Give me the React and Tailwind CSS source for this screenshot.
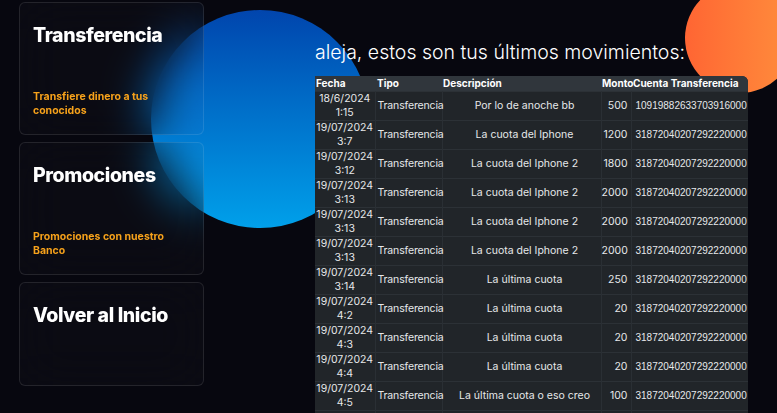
import React from 'react';

const movimientos = [
  ['18/6/2024 1:15', 'Transferencia', 'Por lo de anoche bb', '500', '10919882633703916000'],
  ['19/07/2024 3:7', 'Transferencia', 'La cuota del Iphone', '1200', '31872040207292220000'],
  ['19/07/2024 3:12', 'Transferencia', 'La cuota del Iphone 2', '1800', '31872040207292220000'],
  ['19/07/2024 3:13', 'Transferencia', 'La cuota del Iphone 2', '2000', '31872040207292220000'],
  ['19/07/2024 3:13', 'Transferencia', 'La cuota del Iphone 2', '2000', '31872040207292220000'],
  ['19/07/2024 3:13', 'Transferencia', 'La cuota del Iphone 2', '2000', '31872040207292220000'],
  ['19/07/2024 3:14', 'Transferencia', 'La última cuota', '250', '31872040207292220000'],
  ['19/07/2024 4:2', 'Transferencia', 'La última cuota', '20', '31872040207292220000'],
  ['19/07/2024 4:3', 'Transferencia', 'La última cuota', '20', '31872040207292220000'],
  ['19/07/2024 4:4', 'Transferencia', 'La última cuota', '20', '31872040207292220000'],
  ['19/07/2024 4:5', 'Transferencia', 'La última cuota o eso creo', '100', '31872040207292220000'],
  ['19/07/2024 4:6', 'Transferencia', 'La última cuota', '20', '31872040207292220000'],
];

function Card({ title, text, tall }) {
  return (
    <div
      className={`w-[185px] rounded-md border border-white/10 bg-white/[0.02] backdrop-blur-xl px-[13px] ${
        tall ? 'h-[133px]' : 'h-[104px]'
      }`}
    >
      <h2 className="mt-[17px] text-[19.5px] leading-[30px] font-extrabold text-white tracking-[-0.4px]">{title}</h2>
      {text && (
        <p className="mt-[40px] pr-[20px] text-[10.5px] leading-[14px] font-bold text-[#f7a21b]">{text}</p>
      )}
    </div>
  );
}

export default function App() {
  return (
    <div className="relative w-[777px] h-[413px] overflow-hidden bg-[#07070f] font-['Inter',sans-serif]">
      {/* fondo */}
      <div className="absolute left-[151px] top-[10px] w-[218px] h-[218px] rounded-full bg-gradient-to-b from-[#0245ad] to-[#02a0ea]" />
      <div className="absolute left-[685px] top-[-17px] w-[110px] h-[110px] rounded-full bg-gradient-to-r from-[#ff6533] to-[#ff8d3c]" />
      <div className="absolute left-[303px] top-[392px] w-[120px] h-[120px] rounded-full bg-[#ff5f2e]" />

      <div className="relative flex">
        <div className="flex flex-col gap-[7px] pl-[19px] pt-[2px]">
          <Card title="Transferencia" text="Transfiere dinero a tus conocidos" tall />
          <Card title="Promociones" text="Promociones con nuestro Banco" tall />
          <Card title="Volver al Inicio" />
        </div>

        <div className="ml-[111px] pt-[38px]">
          <h1 className="text-[19.5px] leading-[28px] font-light text-white">
            aleja, estos son tus últimos movimientos:
          </h1>
          <table className="mt-[10px] table-fixed border-collapse w-[433px] bg-[#212529] text-[#e6e8ea] rounded-tr-md overflow-hidden">
            <colgroup>
              <col className="w-[60px]" />
              <col className="w-[67px]" />
              <col className="w-[159px]" />
              <col className="w-[30px]" />
              <col className="w-[117px]" />
            </colgroup>
            <thead>
              <tr className="bg-[#30363c] text-[10px] leading-[15px] font-bold text-white text-left">
                <th className="pl-[1px]">Fecha</th>
                <th className="pl-[2px]">Tipo</th>
                <th className="pl-[1px]">Descripción</th>
                <th className="pl-[1px]">Monto</th>
                <th className="pl-[2px] whitespace-nowrap">Cuenta Transferencia</th>
              </tr>
            </thead>
            <tbody className="text-[10.5px] leading-[14px]">
              {movimientos.map((m, i) => (
                <tr key={i} className="border-t border-[#2c3136]">
                  <td className="text-center border-r border-[#2a2f34]">{m[0]}</td>
                  <td className="pl-[2px] border-r border-[#2a2f34] tracking-[-0.15px] whitespace-nowrap">{m[1]}</td>
                  <td className="text-center pl-[6px] border-r border-[#2a2f34]">{m[2]}</td>
                  <td className="text-right pr-[3px] border-r border-[#2a2f34]">{m[3]}</td>
                  <td className="pl-[4px] whitespace-nowrap font-['Liberation_Sans',sans-serif] text-[10px]">{m[4]}</td>
                </tr>
              ))}
            </tbody>
          </table>
        </div>
      </div>
    </div>
  );
}
